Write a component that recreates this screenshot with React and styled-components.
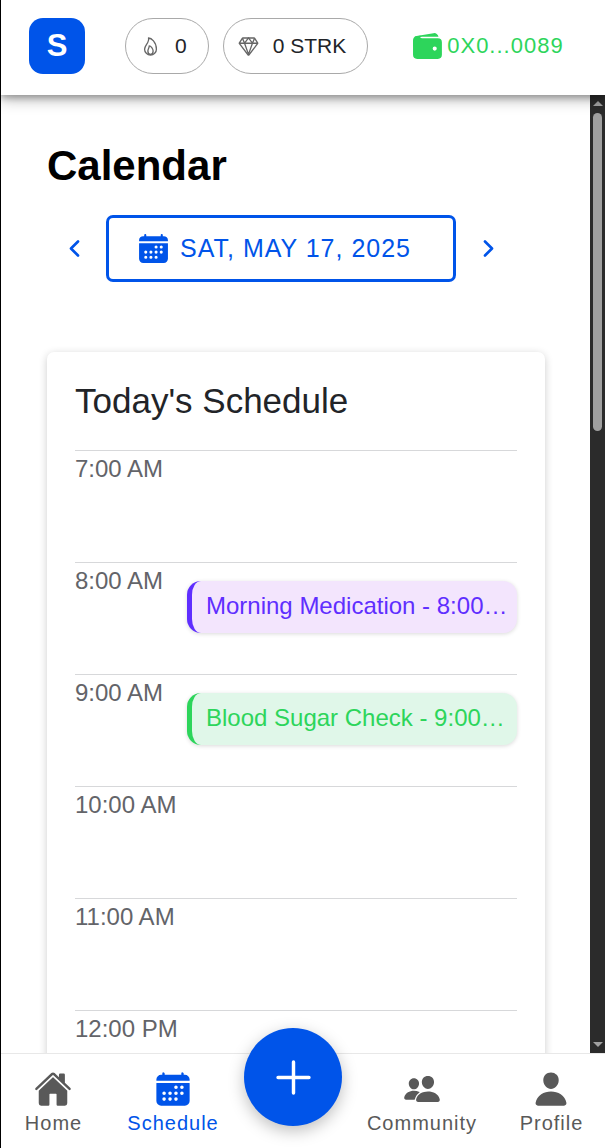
import React from "react";
import styled, { createGlobalStyle } from "styled-components";
import {
  IoAdd,
  IoCalendar,
  IoChevronBack,
  IoChevronForward,
  IoDiamondOutline,
  IoFlameOutline,
  IoHome,
  IoPeople,
  IoPerson,
  IoWallet,
} from "react-icons/io5";

const blue = "#0054e9";
const green = "#2dd55b";
const violet = "#5f2eff";

const GlobalStyle = createGlobalStyle`
  * { box-sizing: border-box; }
  body { margin: 0; background: #fff; }
  button { font: inherit; color: inherit; background: none; border: 0; padding: 0; cursor: pointer; }
`;

const Shell = styled.div`
  display: flex;
  flex-direction: column;
  height: 100vh;
  border-left: 1px solid #000;
  background: #fff;
  color: #222428;
  font-family: "Liberation Sans", Arial, sans-serif;
`;

const Header = styled.header`
  position: relative;
  z-index: 1;
  display: flex;
  align-items: flex-start;
  flex-shrink: 0;
  height: 95px;
  padding: 18px 28px;
  background: #fff;
  box-shadow: 0 3px 6px rgba(0, 0, 0, 0.24), 0 4px 14px rgba(0, 0, 0, 0.3);
`;

const Logo = styled.a`
  display: grid;
  place-items: center;
  width: 56px;
  height: 56px;
  border-radius: 14px;
  background: ${blue};
  color: #fff;
  font-size: 31px;
  font-weight: 700;
  text-decoration: none;
`;

const Stats = styled.div`
  display: flex;
  gap: 14px;
  margin-left: 40px;
`;

const Chip = styled.div`
  display: flex;
  align-items: center;
  gap: 14px;
  height: 56px;
  padding: 0 21px 0 14px;
  border: 1px solid #a9a9a9;
  border-radius: 28px;
  font-size: 21px;

  svg { color: #666; }
`;

const WalletButton = styled.button`
  display: flex;
  align-items: center;
  gap: 3px;
  height: 56px;
  margin-left: 43px;
  color: ${green};
  font-size: 22px;
  letter-spacing: 1px;
`;

const Body = styled.div`
  display: flex;
  flex: 1;
  min-height: 0;
`;

const Content = styled.main`
  flex: 1;
  min-width: 0;
  overflow: hidden;
  padding: 46px 45px 0 46px;
`;

const Title = styled.h1`
  margin: 0;
  color: #000;
  font-size: 42px;
  line-height: 50px;
`;

const DatePicker = styled.div`
  display: flex;
  align-items: center;
  gap: 18px;
  margin: 24px 0 70px 13px;
  color: ${blue};
`;

const StepButton = styled.button`
  display: grid;
  place-items: center;
  width: 28px;
  height: 40px;

  path { stroke-width: 54px; }
`;

const DateButton = styled.button`
  display: flex;
  align-items: center;
  gap: 10px;
  width: 350px;
  height: 67px;
  padding: 0 28px;
  border: 3px solid ${blue};
  border-radius: 7px;
  font-size: 25px;
  letter-spacing: 1px;
  white-space: nowrap;
`;

const Card = styled.section`
  padding: 28px 28px 0;
  border-radius: 7px;
  background: #fff;
  box-shadow: 0 2px 8px rgba(0, 0, 0, 0.2);
`;

const CardTitle = styled.h2`
  margin: 0 0 28px;
  font-size: 35px;
  font-weight: 400;
  line-height: 42px;
`;

const Hour = styled.div`
  display: flex;
  height: 112px;
  border-top: 1px solid #d7d8da;
`;

const Time = styled.time`
  flex: 0 0 112px;
  padding-top: 4px;
  color: #636469;
  font-size: 24px;
  line-height: 28px;
`;

const Event = styled.div`
  flex: 1;
  min-width: 0;
  height: 52px;
  margin-top: 18px;
  padding: 0 4px 0 14px;
  border-left: 5px solid ${(p) => p.$color};
  border-radius: 14px;
  background: ${(p) => p.$tint};
  box-shadow: 0 1px 4px rgba(0, 0, 0, 0.15);
  color: ${(p) => p.$color};
  font-size: 24px;
  line-height: 50px;
  overflow: hidden;
  text-overflow: ellipsis;
  white-space: nowrap;
`;

const ScrollTrack = styled.div`
  display: flex;
  flex-direction: column;
  align-items: center;
  width: 15px;
  padding: 6px 0;
  background: #2b2b2b;
`;

const ScrollArrow = styled.span`
  border: solid transparent;
  border-width: 0 5px;
  ${(p) => (p.$down ? "border-top: 5px solid #a0a0a0; margin-top: auto;" : "border-bottom: 5px solid #a0a0a0;")}
`;

const ScrollThumb = styled.span`
  width: 9px;
  height: 33.6%;
  margin-top: 7px;
  border-radius: 5px;
  background: #a0a0a0;
`;

const Nav = styled.nav`
  position: relative;
  z-index: 1;
  display: grid;
  grid-template-columns: 105fr 134fr 106fr 152fr 107fr;
  justify-items: center;
  flex-shrink: 0;
  height: 95px;
  border-top: 1px solid #e8e8e8;
  background: #fff;
`;

const NavLink = styled.a`
  display: flex;
  flex-direction: column;
  align-items: center;
  padding-top: 16px;
  color: ${(p) => (p.$active ? blue : "#595959")};
  font-size: 20px;
  letter-spacing: 1px;
  line-height: 30px;
  text-decoration: none;
`;

const AddButton = styled.button`
  display: grid;
  place-items: center;
  width: 98px;
  height: 98px;
  margin-top: -26px;
  border-radius: 50%;
  background: ${blue};
  box-shadow: 0 5px 16px rgba(0, 0, 0, 0.25);
  color: #fff;
`;

const hours = [
  { time: "7:00 AM" },
  { time: "8:00 AM", event: "Morning Medication - 8:00…", color: violet, tint: "#f3e5fd" },
  { time: "9:00 AM", event: "Blood Sugar Check - 9:00…", color: green, tint: "#e0f7e9" },
  { time: "10:00 AM" },
  { time: "11:00 AM" },
  { time: "12:00 PM" },
];

function NavItem({ icon: Icon, label, active }) {
  return (
    <NavLink href="#" $active={active} aria-current={active ? "page" : undefined}>
      <Icon size={38} />
      {label}
    </NavLink>
  );
}

export default function App() {
  return (
    <Shell>
      <GlobalStyle />
      <Header>
        <Logo href="#">S</Logo>
        <Stats>
          <Chip><IoFlameOutline size={21} />0</Chip>
          <Chip><IoDiamondOutline size={21} />0 STRK</Chip>
        </Stats>
        <WalletButton><IoWallet size={33} />0X0...0089</WalletButton>
      </Header>
      <Body>
        <Content>
          <Title>Calendar</Title>
          <DatePicker>
            <StepButton aria-label="Previous day"><IoChevronBack size={25} /></StepButton>
            <DateButton><IoCalendar size={33} />SAT, MAY 17, 2025</DateButton>
            <StepButton aria-label="Next day"><IoChevronForward size={25} /></StepButton>
          </DatePicker>
          <Card>
            <CardTitle>Today's Schedule</CardTitle>
            {hours.map((h) => (
              <Hour key={h.time}>
                <Time>{h.time}</Time>
                {h.event && <Event $color={h.color} $tint={h.tint}>{h.event}</Event>}
              </Hour>
            ))}
          </Card>
        </Content>
        <ScrollTrack aria-hidden="true">
          <ScrollArrow />
          <ScrollThumb />
          <ScrollArrow $down />
        </ScrollTrack>
      </Body>
      <Nav>
        <NavItem icon={IoHome} label="Home" />
        <NavItem icon={IoCalendar} label="Schedule" active />
        <AddButton aria-label="Add"><IoAdd size={55} /></AddButton>
        <NavItem icon={IoPeople} label="Community" />
        <NavItem icon={IoPerson} label="Profile" />
      </Nav>
    </Shell>
  );
}
